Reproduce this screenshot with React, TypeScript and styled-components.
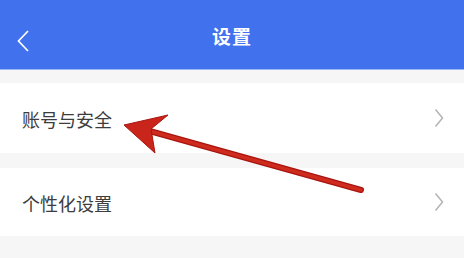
import React from 'react'
import styled, { createGlobalStyle } from 'styled-components'

const GlobalStyle = createGlobalStyle`
  html, body {
    margin: 0;
    padding: 0;
    background: #f7f6f7;
    font-family: "Noto Sans CJK SC", "Noto Sans", sans-serif;
  }
`

const Page = styled.div`
  position: relative;
  width: 464px;
  height: 258px;
  overflow: hidden;
  background: #f7f6f7;
`

const Header = styled.header`
  height: 69px;
  background: #4271ee;
  border-bottom: 1px solid #9bb8f6;
  display: flex;
  align-items: center;
  justify-content: center;
  position: relative;
`

const BackButton = styled.div`
  position: absolute;
  left: 16px;
  top: 28px;
  width: 18px;
  height: 26px;
  display: flex;
  align-items: center;
`

const Title = styled.h1`
  margin: 0;
  color: #fff;
  font-size: 19px;
  font-weight: 700;
  letter-spacing: 1px;
  padding-top: 2px;
`

const List = styled.div`
  display: flex;
  flex-direction: column;
  gap: 15px;
  padding-top: 13px;
`

const Row = styled.div<{ $height: number }>`
  height: ${(p) => p.$height}px;
  background: #fff;
  display: flex;
  align-items: center;
  justify-content: space-between;
  padding: 0 20px 0 22px;
`

const Label = styled.span`
  color: #3d3d3d;
  font-size: 18px;
  line-height: 1;
  padding-top: 2px;
`

// red annotation arrow drawn over the list
const Arrow = styled.svg`
  position: absolute;
  left: 0;
  top: 0;
  pointer-events: none;
`

const Chevron = () => (
  <svg width="10" height="20" viewBox="0 0 10 20">
    <path d="M1.5 1.5 L8.5 10 L1.5 18.5" fill="none" stroke="#b3b3b3" strokeWidth="1.5" />
  </svg>
)

export default function App() {
  return (
    <>
      <GlobalStyle />
      <Page>
        <Header>
          <BackButton>
            <svg width="14" height="24" viewBox="0 0 14 24">
              <path d="M12 2 L2.5 12 L12 22" fill="none" stroke="#fff" strokeWidth="1.7" />
            </svg>
          </BackButton>
          <Title>设置</Title>
        </Header>
        <List>
          <Row $height={70}>
            <Label>账号与安全</Label>
            <Chevron />
          </Row>
          <Row $height={68}>
            <Label>个性化设置</Label>
            <Chevron />
          </Row>
        </List>
        <Arrow width="464" height="258" viewBox="0 0 464 258">
          <line x1="146" y1="130" x2="361" y2="190" stroke="#a8150f" strokeWidth="6" strokeLinecap="round" />
          <line x1="146" y1="130" x2="361" y2="190" stroke="#cf2a1e" strokeWidth="3.5" strokeLinecap="round" />
          <path d="M124 125 L168 115 L151 129 L155 153 Z" fill="#c9251b" stroke="#a8150f" strokeWidth="1" strokeLinejoin="round" />
        </Arrow>
      </Page>
    </>
  )
}
